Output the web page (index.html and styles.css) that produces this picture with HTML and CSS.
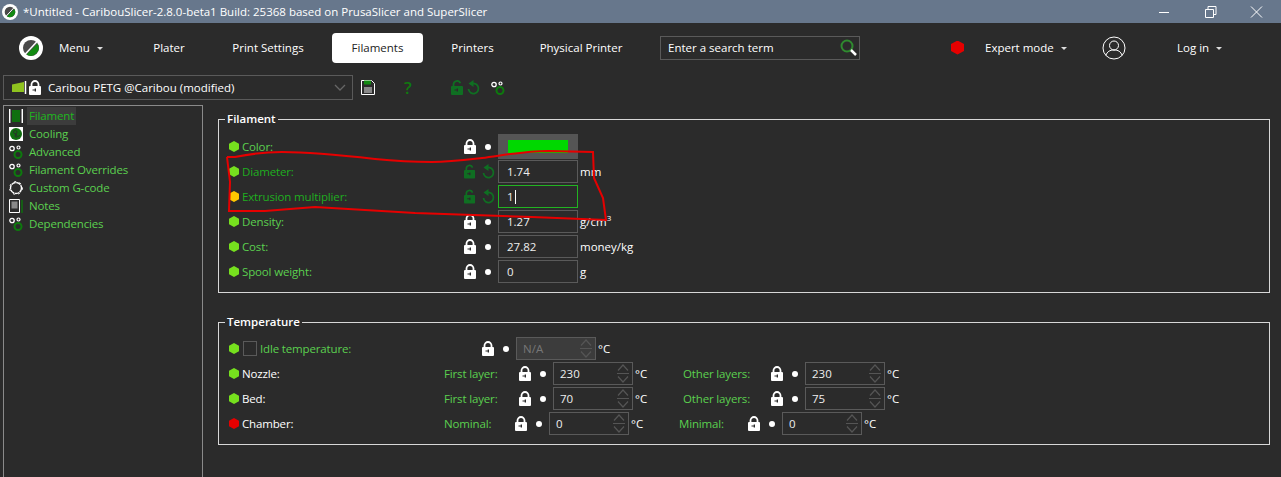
FILE: index.html
```html
<!DOCTYPE html>
<html lang="en">
<head>
  <meta charset="UTF-8">
  <meta name="viewport" content="width=device-width, initial-scale=1.0">
  <title>CaribouSlicer</title>
  <link rel="stylesheet" href="styles.css">
</head>
<body>
  <!-- shared icons -->
  <svg class="defs" width="0" height="0">
    <symbol id="lock" viewBox="0 0 12 15">
      <path d="M2.500 7V4.500a3.500 3.500 0 0 1 7 0V7" fill="none" stroke="currentColor" stroke-width="1.800"/>
      <path d="M1 6h10a1 1 0 0 1 1 1v7a1 1 0 0 1-1 1H1a1 1 0 0 1-1-1V7a1 1 0 0 1 1-1z" fill="currentColor"/>
      <path d="M3.500 9.500h2.200v-1h1.300v3H5.700v-1H3.500z" fill="#2b2b2b"/>
    </symbol>
    <symbol id="unlock" viewBox="0 0 13 15">
      <path d="M2.500 7V4.500a3.500 3.500 0 0 1 6.800-1.200" fill="none" stroke="currentColor" stroke-width="1.800"/>
      <path d="M1 6h10a1 1 0 0 1 1 1v7a1 1 0 0 1-1 1H1a1 1 0 0 1-1-1V7a1 1 0 0 1 1-1z" fill="currentColor"/>
      <path d="M3.500 9.500h2.200v-1h1.300v3H5.700v-1H3.500z" fill="#2b2b2b"/>
    </symbol>
    <symbol id="undo" viewBox="0 0 13 15">
      <path d="M3.500 4.500a5 5 0 1 1-2 4.500" fill="none" stroke="currentColor" stroke-width="1.800"/>
      <path d="M6.500 0v7L1.500 3.500z" fill="currentColor"/>
    </symbol>
    <symbol id="spin" viewBox="0 0 12 21">
      <path d="M1 7.500L6 2l5 5.500M1 13.500L6 19l5-5.500M0 10.500h12" fill="none" stroke="#555" stroke-width="1.200"/>
    </symbol>
    <symbol id="gears" viewBox="0 0 14 14">
      <circle cx="3" cy="3.500" r="2.200" fill="none" stroke="#fff" stroke-width="1.300"/>
      <circle cx="9.500" cy="2.500" r="1.500" fill="none" stroke="#fff" stroke-width="1.200"/>
      <circle cx="9" cy="9.500" r="3.500" fill="none" stroke="#0d7a0d" stroke-width="2"/>
    </symbol>
    <symbol id="logo" viewBox="0 0 24 24">
      <circle cx="12" cy="12" r="12" fill="#fff"/>
      <circle cx="12" cy="12" r="8" fill="#4a4a4a"/>
      <path d="M18.500 7.500a8 8 0 0 1-11 11z" fill="#128a12"/>
      <path d="M19 4.500L5 19.500" stroke="#fff" stroke-width="1.500"/>
    </symbol>
  </svg>

  <div class="titlebar">
    <svg class="title-logo"><use href="#logo"/></svg>
    <span class="title-text">*Untitled - CaribouSlicer-2.8.0-beta1 Build: 25368 based on PrusaSlicer and SuperSlicer</span>
    <div class="win-btns">
      <svg width="46" height="23" viewBox="0 0 46 23"><path d="M18 12.500h10" stroke="#fff"/></svg>
      <svg width="46" height="23" viewBox="0 0 46 23"><path d="M18.500 9.500h8v8h-8zM21 9.500v-3h8v8h-2.500" fill="none" stroke="#fff"/></svg>
      <svg width="46" height="23" viewBox="0 0 46 23"><path d="M18 6.500l11 11M29 6.500l-11 11" stroke="#fff"/></svg>
    </div>
  </div>

  <nav class="topnav">
    <svg class="nav-logo"><use href="#logo"/></svg>
    <span class="nav-menu">Menu <i class="caret"></i></span>
    <a class="tab tab-plater">Plater</a>
    <a class="tab tab-print">Print Settings</a>
    <a class="tab tab-active">Filaments</a>
    <a class="tab tab-printers">Printers</a>
    <a class="tab tab-physical">Physical Printer</a>
    <div class="search">
      <span>Enter a search term</span>
      <svg width="20" height="20" viewBox="0 0 20 20"><circle cx="8" cy="8" r="5.500" fill="none" stroke="#2f8a2f" stroke-width="2"/><path d="M12 12l5 5" stroke="#fff" stroke-width="2.500"/></svg>
    </div>
    <i class="hex hex-mode"></i>
    <span class="nav-mode">Expert mode <i class="caret"></i></span>
    <svg class="user" width="24" height="24" viewBox="0 0 24 24" fill="none" stroke="#fff" stroke-width="1"><circle cx="12" cy="12" r="11"/><circle cx="12" cy="9.500" r="4.500"/><path d="M4 19.500c1-4 4-5.500 8-5.500s7 1.500 8 5.500"/></svg>
    <span class="nav-login">Log in <i class="caret"></i></span>
  </nav>

  <div class="presetbar">
    <div class="preset">
      <svg class="flag" width="15" height="14" viewBox="0 0 15 14"><path d="M0 3.500L12 1v10H0z" fill="#8fc31f"/><path d="M13.500 0v13" stroke="#fff" stroke-width="1.500"/></svg>
      <svg class="lock preset-lock"><use href="#lock"/></svg>
      <span class="preset-name">Caribou PETG @Caribou (modified)</span>
      <svg class="chev" width="12" height="7" viewBox="0 0 12 7"><path d="M1 1l5 5 5-5" fill="none" stroke="#666" stroke-width="1.300"/></svg>
    </div>
    <svg class="tool-save" width="14" height="15" viewBox="0 0 14 15"><path d="M.5.500h10l3 3v11H.500z" fill="none" stroke="#fff"/><path d="M3 .500h7v4H3z" fill="#128a12"/><path d="M3 7h8v6H3z" fill="#888"/></svg>
    <span class="tool-help">?</span>
    <svg class="lock tool-lock"><use href="#unlock"/></svg>
    <svg class="undo tool-undo"><use href="#undo"/></svg>
    <svg class="tool-gears" width="14" height="14"><use href="#gears"/></svg>
  </div>

  <div class="content">
    <aside class="sidebar">
      <div class="side-item is-current">
        <svg width="14" height="14" viewBox="0 0 14 14"><path d="M3 1h8v12H3z" fill="#0f6f0f"/><path d="M.700 0v14M13.300 0v14" stroke="#fff" stroke-width="1.500"/></svg>
        <span>Filament</span>
      </div>
      <div class="side-item">
        <svg width="14" height="14" viewBox="0 0 14 14"><path d="M0 0h14v14H0z" fill="#fff"/><circle cx="7" cy="7" r="6" fill="#0f6f0f"/><path d="M7 7C4 7 4 4 6 3M7 7c0 3 3 3 4 1M7 7c2-2 0-4-1-4M7 7c-2 2 0 4 1 3" stroke="#2b2b2b" fill="none"/></svg>
        <span>Cooling</span>
      </div>
      <div class="side-item"><svg width="14" height="14"><use href="#gears"/></svg><span>Advanced</span></div>
      <div class="side-item"><svg width="14" height="14"><use href="#gears"/></svg><span>Filament Overrides</span></div>
      <div class="side-item">
        <svg width="14" height="14" viewBox="0 0 14 14"><circle cx="7" cy="7" r="5.500" fill="none" stroke="#fff" stroke-width="1.400" stroke-dasharray="4.500 .6"/><circle cx="7" cy="7" r="6.400" fill="none" stroke="#fff" stroke-width="1" stroke-dasharray="2 3.500"/></svg>
        <span>Custom G-code</span>
      </div>
      <div class="side-item">
        <svg width="14" height="14" viewBox="0 0 14 14"><path d="M.500.500h10v13H.500z" fill="none" stroke="#fff"/><path d="M2.500 2.500h6v7h-6z" fill="#888"/><path d="M13 1v13" stroke="#0f6f0f" stroke-width="1.500"/></svg>
        <span>Notes</span>
      </div>
      <div class="side-item"><svg width="14" height="14"><use href="#gears"/></svg><span>Dependencies</span></div>
    </aside>

    <main class="pages">
      <fieldset class="group group-filament">
        <legend>Filament</legend>
        <div class="row">
          <i class="hex"></i><label class="lbl lbl-f">Color:</label>
          <svg class="lock"><use href="#lock"/></svg><i class="dot"></i>
          <div class="swatch"><b></b></div>
        </div>
        <div class="row">
          <i class="hex"></i><label class="lbl lbl-f mod">Diameter:</label>
          <svg class="lock mod-icon"><use href="#unlock"/></svg><svg class="undo"><use href="#undo"/></svg>
          <div class="input">1.74</div><span class="unit">mm</span>
        </div>
        <div class="row">
          <i class="hex hex-yellow"></i><label class="lbl lbl-f mod">Extrusion multiplier:</label>
          <svg class="lock mod-icon"><use href="#unlock"/></svg><svg class="undo"><use href="#undo"/></svg>
          <div class="input input-focus">1<i class="cursor"></i></div>
        </div>
        <div class="row">
          <i class="hex"></i><label class="lbl lbl-f">Density:</label>
          <svg class="lock"><use href="#lock"/></svg><i class="dot"></i>
          <div class="input">1.27</div><span class="unit">g/cm<sup>3</sup></span>
        </div>
        <div class="row">
          <i class="hex"></i><label class="lbl lbl-f">Cost:</label>
          <svg class="lock"><use href="#lock"/></svg><i class="dot"></i>
          <div class="input">27.82</div><span class="unit">money/kg</span>
        </div>
        <div class="row">
          <i class="hex"></i><label class="lbl lbl-f">Spool weight:</label>
          <svg class="lock"><use href="#lock"/></svg><i class="dot"></i>
          <div class="input">0</div><span class="unit">g</span>
        </div>
      </fieldset>

      <fieldset class="group group-temp">
        <legend>Temperature</legend>
        <div class="row">
          <i class="hex"></i><i class="check"></i><label class="lbl lbl-idle">Idle temperature:</label>
          <svg class="lock"><use href="#lock"/></svg><i class="dot"></i>
          <div class="input spin input-off">N/A<svg class="spinner"><use href="#spin"/></svg></div><span class="unit">°C</span>
        </div>
        <div class="row">
          <i class="hex"></i><label class="lbl lbl-t">Nozzle:</label>
          <label class="side side-first">First layer:</label>
          <svg class="lock"><use href="#lock"/></svg><i class="dot"></i>
          <div class="input spin">230<svg class="spinner"><use href="#spin"/></svg></div><span class="unit unit-t">°C</span>
          <label class="side side-other">Other layers:</label>
          <svg class="lock"><use href="#lock"/></svg><i class="dot"></i>
          <div class="input spin">230<svg class="spinner"><use href="#spin"/></svg></div><span class="unit">°C</span>
        </div>
        <div class="row">
          <i class="hex"></i><label class="lbl lbl-t">Bed:</label>
          <label class="side side-first">First layer:</label>
          <svg class="lock"><use href="#lock"/></svg><i class="dot"></i>
          <div class="input spin">70<svg class="spinner"><use href="#spin"/></svg></div><span class="unit unit-t">°C</span>
          <label class="side side-other">Other layers:</label>
          <svg class="lock"><use href="#lock"/></svg><i class="dot"></i>
          <div class="input spin">75<svg class="spinner"><use href="#spin"/></svg></div><span class="unit">°C</span>
        </div>
        <div class="row">
          <i class="hex hex-red"></i><label class="lbl lbl-t">Chamber:</label>
          <label class="side side-nominal">Nominal:</label>
          <svg class="lock"><use href="#lock"/></svg><i class="dot"></i>
          <div class="input spin">0<svg class="spinner"><use href="#spin"/></svg></div><span class="unit unit-t">°C</span>
          <label class="side side-minimal">Minimal:</label>
          <svg class="lock"><use href="#lock"/></svg><i class="dot"></i>
          <div class="input spin">0<svg class="spinner"><use href="#spin"/></svg></div><span class="unit">°C</span>
        </div>
      </fieldset>
    </main>
  </div>

  <!-- hand drawn annotation on top of the screenshot -->
  <svg class="scribble" width="1281" height="477" viewBox="0 0 1281 477">
    <path d="M227 157L235 157C250 154 265 152 282 152C300 152 340 155 375 159C395 161 415 162 432 162C450 162 465 160 482 158C505 155 525 151 548 151L593 152L594 178L603 198L606 220L532 217L415 213L315 207L265 211L229 211L230 182L227 157" fill="none" stroke="#e60000" stroke-width="2"/>
  </svg>
</body>
</html>
```

FILE: styles.css
```css
:root {
  --bg: #2b2b2b;
  --line: #5a5a5a;
  --green: #5bd04f;
  --green-mod: #1fae1f;
  --green-dark: #0f6f22;
}
* { box-sizing: border-box; }
html, body { height: 100%; }
body {
  margin: 0;
  height: 477px;
  overflow: hidden;
  display: flex;
  flex-direction: column;
  position: relative;
  background-color: var(--bg);
  color: #fff;
  font-family: "Open Sans", "Noto Sans", sans-serif;
  font-size: 11.5px;
}
.defs { position: absolute; }

/* title bar */
.titlebar {
  height: 23px;
  flex: none;
  background-color: #67778c;
  display: flex;
  align-items: center;
  padding-left: 2px;
}
.title-logo { width: 16px; height: 16px; margin-right: 5px; }
.title-text { font-size: 11.5px; }
.win-btns { margin-left: auto; display: flex; margin-right: 2px; }
.win-btns svg { display: block; }

/* main tabs */
.topnav {
  height: 49px;
  flex: none;
  display: flex;
  align-items: center;
  padding-left: 19px;
}
.nav-logo { width: 24px; height: 24px; margin-right: 16px; }
.nav-menu { width: 45px; }
.caret {
  display: inline-block;
  width: 0;
  height: 0;
  margin-left: 4px;
  vertical-align: middle;
  border: 3px solid transparent;
  border-top-color: #ddd;
  border-bottom: 0;
}
.tab { display: block; text-align: center; line-height: 30px; height: 30px; }
.tab-plater { width: 90px; margin-left: 20px; }
.tab-print { width: 90px; margin-left: 9px; }
.tab-active {
  width: 91px;
  margin-left: 19px;
  background-color: #fff;
  color: #222;
  border-radius: 4px;
}
.tab-printers { width: 91px; margin-left: 4px; }
.tab-physical { width: 118px; margin-left: 4px; }
.search {
  width: 200px;
  height: 24px;
  margin-left: 20px;
  border: 1px solid var(--line);
  display: flex;
  align-items: center;
  justify-content: space-between;
  padding-left: 7px;
  padding-right: 0;
}
.hex-mode { margin-left: 91px; width: 13px !important; height: 14px !important; background-color: #e60000 !important; }
.nav-mode { margin-left: 21px; width: 117px; }
.nav-login { margin-left: 51px; }

/* preset row */
.presetbar {
  height: 31px;
  flex: none;
  display: flex;
  align-items: center;
  padding-left: 3px;
}
.preset {
  width: 350px;
  height: 25px;
  border: 1px solid var(--line);
  display: flex;
  align-items: center;
  padding-left: 8px;
  padding-right: 6px;
}
.flag { margin-right: 2px; }
.preset .preset-lock { width: 12px; height: 15px; color: #fff; margin-right: 7px; }
.preset-name { flex: 1; }
.tool-save { margin-left: 8px; }
.tool-help { margin-left: 29px; color: #0f7a0f; font-size: 17px; font-weight: 600; width: 12px; }
.presetbar .tool-lock { margin-left: 35px; color: var(--green-dark); width: 13px; }
.presetbar .tool-undo { margin-left: 3px; color: var(--green-dark); }
.tool-gears { margin-left: 8px; }

/* tree on the left + pages */
.content { flex: 1; min-height: 0; margin-top: 2px; display: flex; align-items: stretch; }
.sidebar {
  width: 200px;
  margin-left: 3px;
  border: 1px solid #8a8a8a;
  border-bottom: 0;
  padding: 1px 0 0 5px;
}
.side-item {
  height: 18px;
  display: flex;
  align-items: center;
  gap: 4px;
  color: var(--green);
  letter-spacing: -.15px;
}
.side-item svg { flex: none; }
.side-item span { padding: 0 2px; height: 18px; line-height: 18px; }
.side-item.is-current span { background-color: #3c3c3c; color: #1fb81f; }

.pages { flex: 1; padding: 7px 11px 0 15px; }
.group {
  margin: 0;
  padding: 0 0 0 10px;
  border: 1px solid #d8d8d8;
  position: relative;
}
.group legend {
  margin-left: -4px;
  padding: 0 2px;
  font-weight: 600;
  font-size: 11.5px;
  line-height: 14px;
}
.group-filament { height: 181px; padding-top: 8px; }
.group-temp { height: 130px; margin-top: 22px; padding-top: 7px; }

/* option rows */
.row { height: 25px; display: flex; align-items: center; }
.hex {
  width: 10px;
  height: 11px;
  flex: none;
  background-color: #76e01e;
  clip-path: polygon(50% 0, 100% 25%, 100% 75%, 50% 100%, 0 75%, 0 25%);
}
.hex-yellow { background-color: #ffc800; }
.hex-red { background-color: #e60000; }
.lbl { color: var(--green); margin-left: 3px; flex: none; letter-spacing: -.15px; }
.lbl.mod { color: var(--green-mod); }
.lbl-f { width: 222px; }
.lbl-t { width: 202px; color: #fff; }
.lbl-idle { width: 222px; margin-left: 3px; }
.check { width: 14px; height: 15px; margin-left: 4px; border: 1px solid var(--line); flex: none; }
.side { color: var(--green); flex: none; letter-spacing: -.15px; }
.side-first { width: 75px; }
.side-other { width: 88px; }
.side-nominal { width: 71px; }
.side-minimal { width: 69px; }
.lock { width: 12px; height: 15px; flex: none; color: #fff; }
.mod-icon { color: var(--green-dark); }
.undo { width: 13px; height: 15px; flex: none; margin-left: 6px; margin-right: 3px; color: var(--green-dark); }
.dot {
  width: 6px;
  height: 6px;
  margin: 0 7px 0 9px;
  border-radius: 50%;
  background-color: #fff;
  flex: none;
}
.input {
  width: 80px;
  height: 23px;
  flex: none;
  border: 1px solid var(--line);
  padding-left: 8px;
  line-height: 21px;
  position: relative;
  color: #eee;
}
.input.spin { padding-left: 6px; }
.input-focus { border-color: #22b422; }
.input-off { background-color: #3c3c3c; color: #777; }
.cursor { display: inline-block; width: 1px; height: 14px; margin-left: 1px; vertical-align: -3px; background-color: #fff; }
.spinner { position: absolute; top: 0; right: 3px; width: 12px; height: 21px; }
.swatch {
  width: 80px;
  height: 25px;
  flex: none;
  background-color: #555;
  padding: 6px 10px;
}
.swatch b { display: block; height: 13px; background-color: #00d800; }
.unit { margin-left: 2px; white-space: nowrap; }
.unit sup { font-size: 8px; line-height: 0; }
.unit-t { width: 48px; }
.scribble { position: absolute; top: 0; left: 0; pointer-events: none; }
```
